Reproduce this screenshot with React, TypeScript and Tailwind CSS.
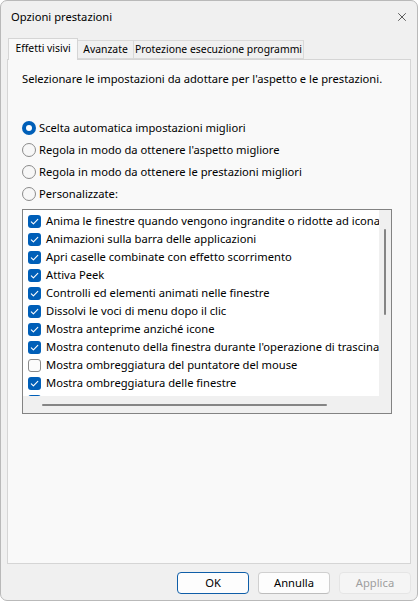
import { X } from 'lucide-react'

const options = [
  { label: 'Scelta automatica impostazioni migliori', selected: true },
  { label: "Regola in modo da ottenere l'aspetto migliore", selected: false },
  { label: 'Regola in modo da ottenere le prestazioni migliori', selected: false },
  { label: 'Personalizzate:', selected: false },
]

const effects = [
  { label: 'Anima le finestre quando vengono ingrandite o ridotte ad icona', checked: true },
  { label: 'Animazioni sulla barra delle applicazioni', checked: true },
  { label: 'Apri caselle combinate con effetto scorrimento', checked: true },
  { label: 'Attiva Peek', checked: true },
  { label: 'Controlli ed elementi animati nelle finestre', checked: true },
  { label: 'Dissolvi le voci di menu dopo il clic', checked: true },
  { label: 'Mostra anteprime anziché icone', checked: true },
  { label: "Mostra contenuto della finestra durante l'operazione di trascinamento", checked: true },
  { label: 'Mostra ombreggiatura del puntatore del mouse', checked: false },
  { label: 'Mostra ombreggiatura delle finestre', checked: true },
  { label: 'Mostra rettangolo di selezione trasparente', checked: true },
]

function Radio({ selected }: { selected: boolean }) {
  if (selected) {
    return (
      <span className="w-[14px] h-[14px] rounded-full bg-[#005fb8] flex items-center justify-center shrink-0">
        <span className="w-[6px] h-[6px] rounded-full bg-white" />
      </span>
    )
  }
  return <span className="w-[14px] h-[14px] rounded-full border border-[#8b8b8b] bg-[#f7f7f7] shrink-0" />
}

function Checkbox({ checked }: { checked: boolean }) {
  if (!checked) {
    return <span className="w-[13px] h-[13px] rounded-[3px] border border-[#8b8b8b] bg-[#fbfbfb] shrink-0" />
  }
  return (
    <span className="w-[13px] h-[13px] rounded-[3px] bg-[#005fb8] flex items-center justify-center shrink-0">
      <svg width="13" height="13" viewBox="0 0 13 13" fill="none">
        <path d="M3.3 6.8 L5.4 8.9 L9.8 4.4" stroke="white" strokeWidth="1.1" strokeLinecap="round" strokeLinejoin="round" />
      </svg>
    </span>
  )
}

export default function App() {
  return (
    <div className="w-[419px] h-[602px] bg-white font-['Noto_Sans',sans-serif] text-[11.2px] text-black">
      <div className="w-[418px] h-[601px] bg-[#f0f0f0] border border-[#b9b9b9] rounded-[7px] flex flex-col overflow-hidden">
        {/* title bar */}
        <div className="h-[31px] flex items-center justify-between pl-[10px] pr-[8px] shrink-0">
          <span className="leading-none text-[11.2px]">Opzioni prestazioni</span>
          <X size={14} strokeWidth={1.2} className="text-[#1b1b1b]" />
        </div>

        {/* tabs */}
        <div className="flex items-end h-[27px] pl-[7px] pt-[6px] shrink-0 whitespace-nowrap text-[10.4px]">
          <div className="w-[70px] h-[22px] -mb-px relative z-10 bg-[#f9f9f9] border border-b-0 border-[#d5d5d5] flex items-center justify-center pb-[2px]">
            Effetti visivi
          </div>
          <div className="w-[56px] h-[19px] bg-[#f0f0f0] border border-l-0 border-[#d9d9d9] flex items-center justify-center">
            Avanzate
          </div>
          <div className="w-[170px] h-[19px] bg-[#f0f0f0] border border-l-0 border-[#d9d9d9] flex items-center justify-center">
            Protezione esecuzione programmi
          </div>
        </div>

        {/* panel */}
        <div className="mx-[6px] h-[505px] bg-[#f9f9f9] border border-[#d5d5d5] pt-[11px] px-[14px] shrink-0 flex flex-col">
          <p className="leading-[16px] whitespace-nowrap">Selezionare le impostazioni da adottare per l'aspetto e le prestazioni.</p>

          <div className="mt-[30px] flex flex-col">
            {options.map((o) => (
              <div key={o.label} className="h-[22px] flex items-center gap-[3px]">
                <Radio selected={o.selected} />
                <span className="leading-[16px]">{o.label}</span>
              </div>
            ))}
          </div>

          <div className="mt-[4px] w-[370px] h-[205px] border border-[#838383] flex flex-col">
            <div className="flex h-[186px]">
              <div className="flex-1 bg-white overflow-hidden pt-[2px] pl-[5px]">
                {effects.map((e) => (
                  <div key={e.label} className="h-[18px] flex items-center gap-[5px] whitespace-nowrap">
                    <Checkbox checked={e.checked} />
                    <span className="leading-[16px]">{e.label}</span>
                  </div>
                ))}
              </div>
              <div className="w-[12px] bg-[#f0f0f0] pt-[19px] flex justify-center">
                <div className="w-[2px] h-[86px] rounded-full bg-[#858585]" />
              </div>
            </div>
            <div className="flex-1 bg-[#f0f0f0] flex items-center pl-[19px]">
              <div className="w-[285px] h-[2px] rounded-full bg-[#858585]" />
            </div>
          </div>
        </div>

        {/* footer */}
        <div className="flex-1 flex items-start justify-end gap-[9px] pt-[8px] pr-[6px]">
          <button className="w-[72px] h-[22px] rounded-[4px] bg-[#fdfdfd] border border-[#0f5ea8] leading-none">OK</button>
          <button className="w-[72px] h-[22px] rounded-[4px] bg-[#fdfdfd] border border-[#d0d0d0] border-b-[#bdbdbd] leading-none">Annulla</button>
          <button className="w-[72px] h-[22px] rounded-[4px] bg-[#f5f5f5] border border-[#e5e5e5] text-[#9e9e9e] leading-none">Applica</button>
        </div>
      </div>
    </div>
  )
}
